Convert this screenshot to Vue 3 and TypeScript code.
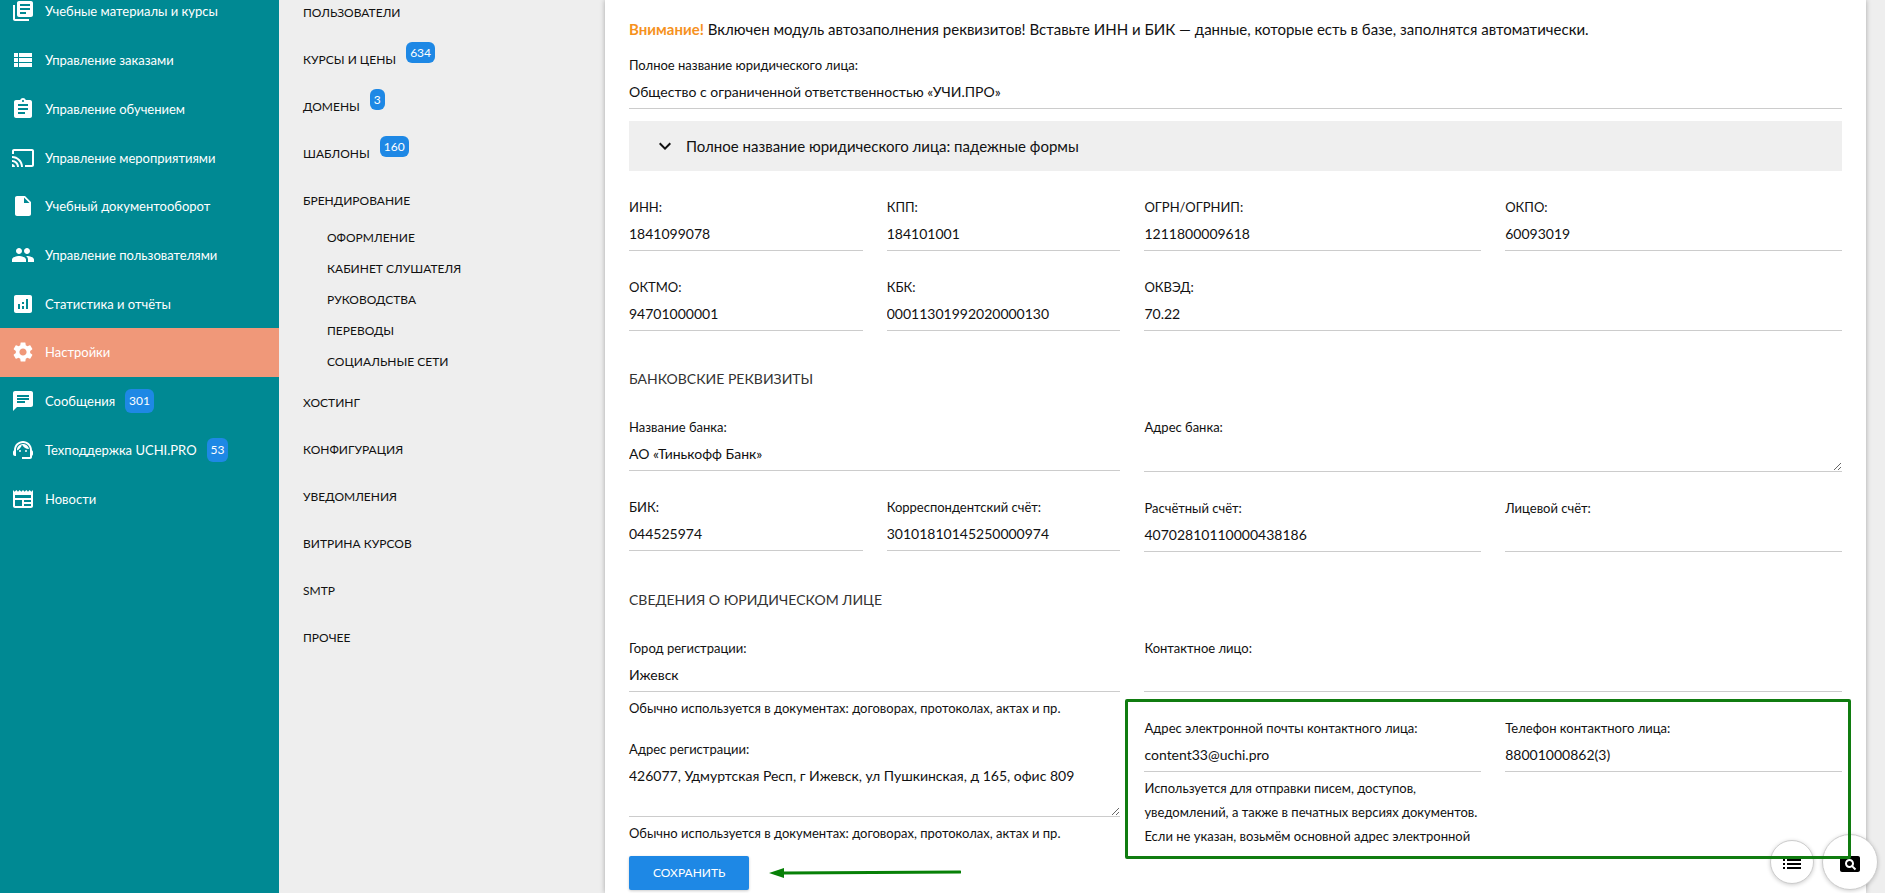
<script setup lang="ts">
import { reactive } from 'vue'

interface MenuItem {
  title: string
  icon: string
  badge?: number
  active?: boolean
}

interface SettingsItem {
  title: string
  badge?: number
  children?: string[]
}

interface Field {
  id: string
  label: string
  value: string
  half?: boolean
  area?: 'short' | 'tall'
  hint?: string[]
}

interface Section {
  title?: string
  columns: { fields: Field[]; marked?: Field[] }[]
}

const menu: MenuItem[] = [
  { title: 'Учебные материалы и курсы', icon: 'M4 6H2v14c0 1.1.9 2 2 2h14v-2H4V6zm16-4H8c-1.1 0-2 .9-2 2v12c0 1.1.9 2 2 2h12c1.1 0 2-.9 2-2V4c0-1.1-.9-2-2-2zm-1 9H9V9h10v2zm-4 4H9v-2h6v2zm4-8H9V5h10v2z' },
  { title: 'Управление заказами', icon: 'M3 14h4v-4H3v4zm0 5h4v-4H3v4zM3 9h4V5H3v4zm5 5h13v-4H8v4zm0 5h13v-4H8v4zM8 5v4h13V5H8z' },
  { title: 'Управление обучением', icon: 'M19 3h-4.18C14.4 1.84 13.3 1 12 1c-1.3 0-2.4.84-2.82 2H5c-1.1 0-2 .9-2 2v14c0 1.1.9 2 2 2h14c1.1 0 2-.9 2-2V5c0-1.1-.9-2-2-2zm-7 0c.55 0 1 .45 1 1s-.45 1-1 1-1-.45-1-1 .45-1 1-1zm2 14H7v-2h7v2zm3-4H7v-2h10v2zm0-4H7V7h10v2z' },
  { title: 'Управление мероприятиями', icon: 'M21 3H3c-1.1 0-2 .9-2 2v3h2V5h18v14h-7v2h7c1.1 0 2-.9 2-2V5c0-1.1-.9-2-2-2zM1 18v3h3c0-1.66-1.34-3-3-3zm0-4v2c2.76 0 5 2.24 5 5h2c0-3.87-3.13-7-7-7zm0-4v2c4.97 0 9 4.03 9 9h2c0-6.08-4.93-11-11-11z' },
  { title: 'Учебный документооборот', icon: 'M6 2c-1.1 0-1.99.9-1.99 2L4 20c0 1.1.89 2 1.99 2H18c1.1 0 2-.9 2-2V8l-6-6H6zm7 7V3.5L18.5 9H13z' },
  { title: 'Управление пользователями', icon: 'M16 11c1.66 0 2.99-1.34 2.99-3S17.66 5 16 5c-1.66 0-3 1.34-3 3s1.34 3 3 3zm-8 0c1.66 0 2.99-1.34 2.99-3S9.66 5 8 5C6.34 5 5 6.34 5 8s1.34 3 3 3zm0 2c-2.33 0-7 1.17-7 3.5V19h14v-2.5c0-2.33-4.67-3.5-7-3.5zm8 0c-.29 0-.62.02-.97.05 1.16.84 1.97 1.97 1.97 3.45V19h6v-2.5c0-2.33-4.67-3.5-7-3.5z' },
  { title: 'Статистика и отчёты', icon: 'M19 3H5c-1.1 0-2 .9-2 2v14c0 1.1.9 2 2 2h14c1.1 0 2-.9 2-2V5c0-1.1-.9-2-2-2zM9 17H7v-5h2v5zm4 0h-2v-3h2v3zm0-5h-2v-2h2v2zm4 5h-2V7h2v10z' },
  { title: 'Настройки', active: true, icon: 'M19.14 12.94c.04-.3.06-.61.06-.94 0-.32-.02-.64-.07-.94l2.03-1.58c.18-.14.23-.41.12-.61l-1.92-3.32c-.12-.22-.37-.29-.59-.22l-2.39.96c-.5-.38-1.03-.7-1.62-.94l-.36-2.54c-.04-.24-.24-.41-.48-.41h-3.84c-.24 0-.43.17-.47.41l-.36 2.54c-.59.24-1.13.57-1.62.94l-2.39-.96c-.22-.08-.47 0-.59.22L2.74 8.87c-.12.21-.08.47.12.61l2.03 1.58c-.05.3-.09.63-.09.94s.02.64.07.94l-2.03 1.58c-.18.14-.23.41-.12.61l1.92 3.32c.12.22.37.29.59.22l2.39-.96c.5.38 1.03.7 1.62.94l.36 2.54c.05.24.24.41.48.41h3.84c.24 0 .44-.17.47-.41l.36-2.54c.59-.24 1.13-.56 1.62-.94l2.39.96c.22.08.47 0 .59-.22l1.92-3.32c.12-.22.07-.47-.12-.61l-2.01-1.58zM12 15.6c-1.98 0-3.6-1.62-3.6-3.6s1.62-3.6 3.6-3.6 3.6 1.62 3.6 3.6-1.62 3.6-3.6 3.6z' },
  { title: 'Сообщения', badge: 301, icon: 'M20 2H4c-1.1 0-1.99.9-1.99 2L2 22l4-4h14c1.1 0 2-.9 2-2V4c0-1.1-.9-2-2-2zM6 9h12v2H6V9zm8 5H6v-2h8v2zm4-6H6V6h12v2z' },
  { title: 'Техподдержка UCHI.PRO', badge: 53, icon: 'M21 12.22C21 6.73 16.74 3 12 3c-4.69 0-9 3.65-9 9.28-.6.34-1 .98-1 1.72v2c0 1.1.9 2 2 2h1v-6.1c0-3.87 3.13-7 7-7s7 3.13 7 7V19h-8v2h8c1.1 0 2-.9 2-2v-1.22c.59-.31 1-.92 1-1.64v-2.3c0-.7-.41-1.31-1-1.62zM8 13a1 1 0 1 0 2 0 1 1 0 1 0-2 0zM14 13a1 1 0 1 0 2 0 1 1 0 1 0-2 0zM18 11.03C17.52 8.18 15.04 6 12.05 6c-3.03 0-6.29 2.51-6.03 6.45 2.47-1.01 4.33-3.21 4.86-5.89 1.31 2.63 4 4.44 7.12 4.47z' },
  { title: 'Новости', icon: 'M22 3l-1.67 1.67L18.67 3 17 4.67 15.33 3l-1.66 1.67L12 3l-1.67 1.67L8.67 3 7 4.67 5.33 3 3.67 4.67 2 3v16c0 1.1.9 2 2 2h16c1.1 0 2-.9 2-2V3zM11 19H4v-6h7v6zm9 0h-7v-2h7v2zm0-4h-7v-2h7v2zm0-4H4V8h16v3z' },
]

const settings: SettingsItem[] = [
  { title: 'ПОЛЬЗОВАТЕЛИ' },
  { title: 'КУРСЫ И ЦЕНЫ', badge: 634 },
  { title: 'ДОМЕНЫ', badge: 3 },
  { title: 'ШАБЛОНЫ', badge: 160 },
  { title: 'БРЕНДИРОВАНИЕ', children: ['ОФОРМЛЕНИЕ', 'КАБИНЕТ СЛУШАТЕЛЯ', 'РУКОВОДСТВА', 'ПЕРЕВОДЫ', 'СОЦИАЛЬНЫЕ СЕТИ'] },
  { title: 'ХОСТИНГ' },
  { title: 'КОНФИГУРАЦИЯ' },
  { title: 'УВЕДОМЛЕНИЯ' },
  { title: 'ВИТРИНА КУРСОВ' },
  { title: 'SMTP' },
  { title: 'ПРОЧЕЕ' },
]

const docsHint = ['Обычно используется в документах: договорах, протоколах, актах и пр.']

const fullName = reactive<Field>({
  id: 'full-name',
  label: 'Полное название юридического лица:',
  value: 'Общество с ограниченной ответственностью «УЧИ.ПРО»',
})

const sections = reactive<Section[]>([
  {
    columns: [
      {
        fields: [
          { id: 'inn', label: 'ИНН:', value: '1841099078', half: true },
          { id: 'kpp', label: 'КПП:', value: '184101001', half: true },
          { id: 'oktmo', label: 'ОКТМО:', value: '94701000001', half: true },
          { id: 'kbk', label: 'КБК:', value: '00011301992020000130', half: true },
        ],
      },
      {
        fields: [
          { id: 'ogrn', label: 'ОГРН/ОГРНИП:', value: '1211800009618', half: true },
          { id: 'okpo', label: 'ОКПО:', value: '60093019', half: true },
          { id: 'okved', label: 'ОКВЭД:', value: '70.22' },
        ],
      },
    ],
  },
  {
    title: 'БАНКОВСКИЕ РЕКВИЗИТЫ',
    columns: [
      {
        fields: [
          { id: 'bank', label: 'Название банка:', value: 'АО «Тинькофф Банк»' },
          { id: 'bik', label: 'БИК:', value: '044525974', half: true },
          { id: 'corr', label: 'Корреспондентский счёт:', value: '30101810145250000974', half: true },
        ],
      },
      {
        fields: [
          { id: 'bank-address', label: 'Адрес банка:', value: '', area: 'short' },
          { id: 'account', label: 'Расчётный счёт:', value: '40702810110000438186', half: true },
          { id: 'personal', label: 'Лицевой счёт:', value: '', half: true },
        ],
      },
    ],
  },
  {
    title: 'СВЕДЕНИЯ О ЮРИДИЧЕСКОМ ЛИЦЕ',
    columns: [
      {
        fields: [
          { id: 'city', label: 'Город регистрации:', value: 'Ижевск', hint: docsHint },
          { id: 'address', label: 'Адрес регистрации:', value: '426077, Удмуртская Респ, г Ижевск, ул Пушкинская, д 165, офис 809', area: 'tall', hint: docsHint },
        ],
      },
      {
        fields: [{ id: 'contact', label: 'Контактное лицо:', value: '' }],
        marked: [
          {
            id: 'email',
            label: 'Адрес электронной почты контактного лица:',
            value: 'content33@uchi.pro',
            half: true,
            hint: [
              'Используется для отправки писем, доступов,',
              'уведомлений, а также в печатных версиях документов.',
              'Если не указан, возьмём основной адрес электронной',
            ],
          },
          { id: 'phone', label: 'Телефон контактного лица:', value: '88001000862(3)', half: true },
        ],
      },
    ],
  },
])
</script>

<template>
  <div class="page">
    <nav class="menu" aria-label="Главное меню">
      <ul class="menu-list">
        <li v-for="item in menu" :key="item.title" :class="{ active: item.active }">
          <a href="#" class="menu-link">
            <svg class="icon" viewBox="0 0 24 24" aria-hidden="true"><path :d="item.icon" /></svg>
            <span>{{ item.title }}</span>
            <span v-if="item.badge" class="badge tall">{{ item.badge }}</span>
          </a>
        </li>
      </ul>
    </nav>

    <nav class="settings" aria-label="Настройки">
      <ul class="settings-list">
        <li v-for="item in settings" :key="item.title">
          <a href="#" class="settings-link">
            <span>{{ item.title }}</span>
            <span v-if="item.badge" class="badge raised">{{ item.badge }}</span>
          </a>
          <ul v-if="item.children" class="sub-list">
            <li v-for="child in item.children" :key="child">
              <a href="#" class="sub-link">{{ child }}</a>
            </li>
          </ul>
        </li>
      </ul>
    </nav>

    <main class="card">
      <form @submit.prevent>
        <p class="notice">
          <strong>Внимание!</strong> Включен модуль автозаполнения реквизитов! Вставьте ИНН и БИК — данные, которые есть в базе, заполнятся автоматически.
        </p>

        <div class="full-name">
          <label :for="fullName.id">{{ fullName.label }}</label>
          <input :id="fullName.id" v-model="fullName.value" type="text" />
        </div>

        <button type="button" class="accordion" aria-expanded="false">
          <svg class="icon" viewBox="0 0 24 24" aria-hidden="true">
            <path d="M16.59 8.59L12 13.17 7.41 8.59 6 10l6 6 6-6z" />
          </svg>
          <span>Полное название юридического лица: падежные формы</span>
        </button>

        <template v-for="(section, s) in sections" :key="s">
          <h2 v-if="section.title">{{ section.title }}</h2>
          <div class="columns">
            <div v-for="(column, c) in section.columns" :key="c" class="column">
              <div v-for="field in column.fields" :key="field.id" class="field" :class="{ half: field.half }">
                <label :for="field.id">{{ field.label }}</label>
                <textarea v-if="field.area" :id="field.id" v-model="field.value" :class="field.area"></textarea>
                <input v-else :id="field.id" v-model="field.value" type="text" />
                <p v-if="field.hint" class="hint">
                  <span v-for="line in field.hint" :key="line">{{ line }}</span>
                </p>
              </div>
              <div v-if="column.marked" class="marked">
                <div v-for="field in column.marked" :key="field.id" class="field half">
                  <label :for="field.id">{{ field.label }}</label>
                  <input :id="field.id" v-model="field.value" type="text" />
                  <p v-if="field.hint" class="hint">
                    <span v-for="line in field.hint" :key="line">{{ line }}</span>
                  </p>
                </div>
                <div class="frame" aria-hidden="true"></div>
              </div>
            </div>
          </div>
        </template>

        <div class="actions">
          <button type="submit" class="save">СОХРАНИТЬ</button>
          <svg class="arrow" viewBox="0 0 192 10" aria-hidden="true">
            <path d="M0 5 15 0v3.5L191 2.5a1.4 1.4 0 0 1 0 3L15 6.5V10z" />
          </svg>
        </div>
      </form>
    </main>

    <div class="floating">
      <button type="button" class="round" aria-label="Список">
        <svg class="icon" viewBox="0 0 24 24" aria-hidden="true">
          <path d="M3 13h2v-2H3v2zm0 4h2v-2H3v2zm0-8h2V7H3v2zm4 4h14v-2H7v2zm0 4h14v-2H7v2zM7 7v2h14V7H7z" />
        </svg>
      </button>
      <button type="button" class="round large" aria-label="Поиск по странице">
        <svg class="icon" viewBox="0 0 24 24" aria-hidden="true">
          <path d="M11.5 9C10.12 9 9 10.12 9 11.5s1.12 2.5 2.5 2.5 2.5-1.12 2.5-2.5S12.88 9 11.5 9zM20 4H4c-1.1 0-2 .9-2 2v12c0 1.1.9 2 2 2h16c1.1 0 2-.9 2-2V6c0-1.1-.9-2-2-2zm-3.21 14.21l-2.91-2.91c-.69.44-1.51.7-2.39.7C9.01 16 7 13.99 7 11.5S9.01 7 11.5 7 16 9.01 16 11.5c0 .88-.26 1.69-.7 2.39l2.91 2.9-1.42 1.42z" />
        </svg>
      </button>
    </div>
  </div>
</template>

<style>
body {
  margin: 0;
  background: #eee;
}
</style>

<style scoped>
.page {
  display: flex;
  height: 100vh;
  overflow: hidden;
  background: #eee;
  color: #111;
  font-family: Lato, 'Open Sans', sans-serif;
  font-size: 14px;
  line-height: 24px;
}

ul {
  list-style: none;
  margin: 0;
  padding: 0;
}

a {
  color: inherit;
  text-decoration: none;
}

button,
input,
textarea {
  font: inherit;
  color: inherit;
}

.icon {
  flex: none;
  width: 24px;
  height: 24px;
  fill: currentColor;
}

.badge {
  margin-left: 10px;
  padding: 0 4px;
  border-radius: 6px;
  background: #1e88e5;
  color: #fff;
  font-size: 12px;
  line-height: 21px;
}

.badge.tall {
  line-height: 24px;
}

.badge.raised {
  margin-bottom: 14px;
}

.menu {
  flex: none;
  width: 279px;
  background: #008993;
  color: #fff;
  font-size: 13px;
}

.menu-list {
  display: grid;
  grid-auto-rows: 1fr;
  height: 536px;
  margin-top: -13px;
}

.menu-link {
  display: flex;
  align-items: center;
  height: 100%;
  padding-left: 11px;
}

.menu-link .icon {
  margin-right: 10px;
}

.active {
  background: #f09879;
}

.settings {
  flex: none;
  width: 326px;
  font-size: 12px;
}

.settings-list {
  margin-top: -11px;
}

.settings-link {
  display: flex;
  align-items: center;
  height: 47px;
  padding-left: 24px;
}

.sub-link {
  display: block;
  padding: 0 0 4px 48px;
  line-height: 27px;
}

.card {
  flex: 1;
  min-width: 0;
  margin-right: 19px;
  padding: 17px 24px 0;
  background: #fff;
  box-shadow: 0 0 5px rgba(0, 0, 0, 0.3);
}

p,
h2 {
  margin: 0;
}

.notice {
  font-size: 15px;
}

.notice strong {
  color: #f6921e;
  font-weight: 700;
}

.full-name {
  margin-top: 12px;
}

label {
  display: block;
  font-size: 13px;
}

input,
textarea {
  display: block;
  box-sizing: border-box;
  width: 100%;
  height: 32px;
  margin: 0;
  padding: 0 0 2px;
  border: 0;
  border-bottom: 1px solid #ccc;
  border-radius: 0;
  outline: 0;
  background: transparent;
}

textarea {
  padding-top: 3px;
  overflow: hidden;
  resize: vertical;
}

textarea.short {
  height: 33px;
}

textarea.tall {
  height: 56px;
}

.accordion {
  display: flex;
  align-items: center;
  gap: 9px;
  width: 100%;
  height: 50px;
  margin-top: 12px;
  padding: 0 24px;
  border: 0;
  background: #efefef;
  font-size: 15px;
}

h2 {
  margin-top: 36px;
  color: #333;
  font-size: 14px;
  font-weight: 400;
}

/* Columns carry half of the gutter on each side, so the row is pulled out by it. */
.columns {
  display: flex;
  align-items: flex-start;
  margin: 0 -12px;
}

.column {
  display: flex;
  flex: 7 1 0;
  flex-wrap: wrap;
  min-width: 0;
}

.column:first-child {
  flex-grow: 5;
}

.field {
  box-sizing: border-box;
  width: 100%;
  min-width: 0;
  padding: 24px 12px 0;
}

.field.half {
  width: 50%;
}

.field:has(.hint) + .field {
  padding-top: 17px;
}

.hint {
  margin-top: 4px;
  font-size: 13px;
}

.hint span {
  display: block;
  white-space: nowrap;
}

.marked {
  position: relative;
  display: flex;
  width: 100%;
}

.marked .field.half {
  padding-top: 24px;
}

.frame {
  position: absolute;
  inset: 7px 3px -11px -7px;
  z-index: 2;
  border: 3px solid #107c10;
  border-radius: 2px;
  pointer-events: none;
}

.actions {
  display: flex;
  align-items: center;
  gap: 20px;
  margin-top: 8px;
}

.save {
  height: 34px;
  padding: 0 24px;
  border: 0;
  border-radius: 2px;
  background: #1e88e5;
  box-shadow: 0 1px 3px rgba(0, 0, 0, 0.2);
  color: #fff;
  font-size: 12px;
}

.arrow {
  width: 192px;
  height: 10px;
  fill: #078007;
}

.floating {
  position: fixed;
  right: 7px;
  bottom: 3px;
  z-index: 1;
  display: flex;
  align-items: center;
  gap: 8px;
}

.round {
  display: flex;
  align-items: center;
  justify-content: center;
  box-sizing: border-box;
  width: 44px;
  height: 44px;
  padding: 3px 0 0;
  border: 1px solid #ccc;
  border-radius: 50%;
  background: #fff;
  box-shadow: 0 1px 4px rgba(0, 0, 0, 0.2);
  color: #000;
}

.round.large {
  width: 56px;
  height: 56px;
}
</style>
